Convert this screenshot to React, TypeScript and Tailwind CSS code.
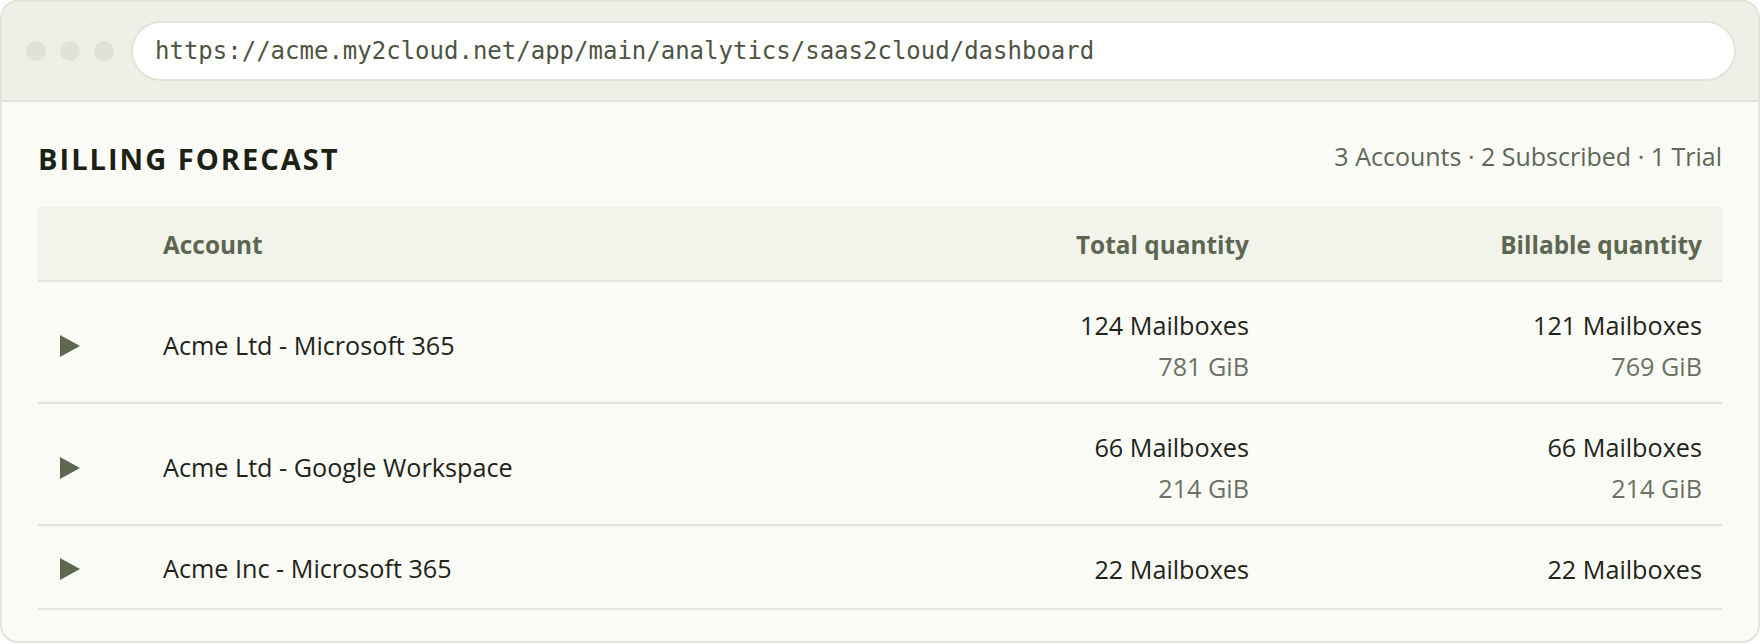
import React from 'react'

type Row = {
  name: string
  total: string
  totalSize?: string
  billable: string
  billableSize?: string
}

const rows: Row[] = [
  { name: 'Acme Ltd - Microsoft 365', total: '124 Mailboxes', totalSize: '781 GiB', billable: '121 Mailboxes', billableSize: '769 GiB' },
  { name: 'Acme Ltd - Google Workspace', total: '66 Mailboxes', totalSize: '214 GiB', billable: '66 Mailboxes', billableSize: '214 GiB' },
  { name: 'Acme Inc - Microsoft 365', total: '22 Mailboxes', billable: '22 Mailboxes' },
]

function Caret() {
  return (
    <svg width="20" height="22" viewBox="0 0 20 22" className="ml-[22px]">
      <path d="M0 0 L20 11 L0 22 Z" fill="#5c6950" />
    </svg>
  )
}

export default function App() {
  return (
    <div className="w-[1760px] h-[644px] bg-white font-['Open_Sans',sans-serif]">
      <div className="h-[643px] rounded-[18px] border-2 border-[#e1e4d8] bg-[#fafbf7] overflow-hidden">
        {/* Title bar */}
        <div className="h-[100px] bg-[#edf0e6] border-b-2 border-[#e1e4d8] flex items-center pl-[24px] pr-[22px]">
          <div className="flex gap-[14px]">
            <span className="w-[20px] h-[20px] rounded-full bg-[#dfe3d5]" />
            <span className="w-[20px] h-[20px] rounded-full bg-[#dfe3d5]" />
            <span className="w-[20px] h-[20px] rounded-full bg-[#dfe3d5]" />
          </div>
          <div className="ml-[17px] flex-1 h-[60px] rounded-full bg-white border-2 border-[#e1e4d8] flex items-center pl-[22px]">
            <span className="font-['DejaVu_Sans_Mono',monospace] text-[24px] text-[#4c5443]">
              https://acme.my2cloud.net/app/main/analytics/saas2cloud/dashboard
            </span>
          </div>
        </div>

        {/* Content */}
        <div className="px-[36px] pt-[39px]">
          <div className="flex items-center justify-between h-[36px]">
            <h1 className="text-[29px] font-bold tracking-[0.07em] text-[#1c2114]">BILLING FORECAST</h1>
            <span className="text-[25px] text-[#5f6756] pb-[4px]">3 Accounts · 2 Subscribed · 1 Trial</span>
          </div>

          <div className="mt-[30px]">
            <div className="grid grid-cols-[125px_1fr_360px_473px] h-[75px] pt-[4px] items-center bg-[#f2f4ec] border-b-2 border-[#e1e4d8] text-[24.4px] font-bold text-[#5d6650]">
              <span />
              <span>Account</span>
              <span className="text-right">Total quantity</span>
              <span className="text-right pr-[20px]">Billable quantity</span>
            </div>
            {rows.map((r) => (
              <div
                key={r.name}
                className={`grid grid-cols-[125px_1fr_360px_473px] items-center pt-[23px] border-b-2 border-[#e1e4d8] text-[25.2px] text-[#1e2418] ${r.totalSize ? 'pb-[15px]' : 'pb-[19px]'}`}
              >
                <Caret />
                <span>{r.name}</span>
                <div className="text-right">
                  <div className="leading-[40px]">{r.total}</div>
                  {r.totalSize && <div className="leading-[42px] text-[#6b7263]">{r.totalSize}</div>}
                </div>
                <div className="text-right pr-[20px]">
                  <div className="leading-[40px]">{r.billable}</div>
                  {r.billableSize && <div className="leading-[42px] text-[#6b7263]">{r.billableSize}</div>}
                </div>
              </div>
            ))}
          </div>
        </div>
      </div>
    </div>
  )
}
